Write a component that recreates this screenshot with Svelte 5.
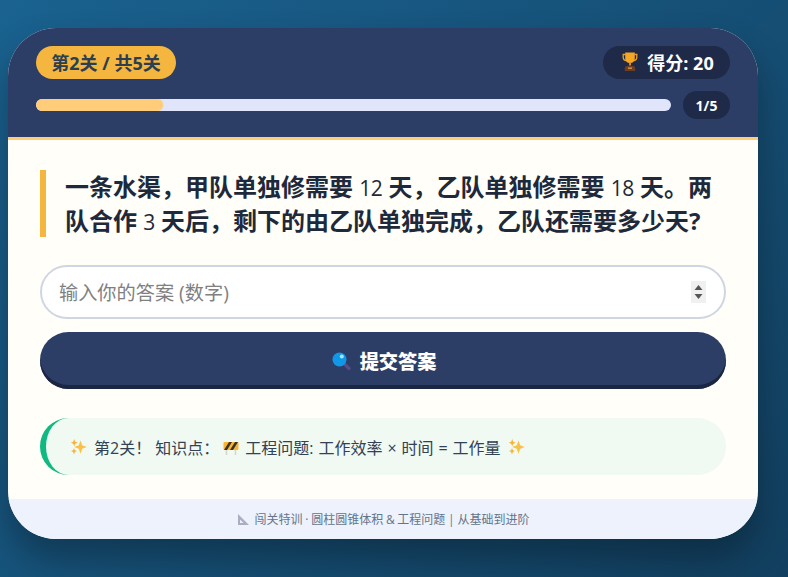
<script>
  const level = 2;
  const total = 5;
  const score = 20;
  const answered = 1;
  const progress = (answered / total) * 100;
</script>

{#snippet sparkle()}
  <svg class="emoji" viewBox="0 0 17 17" width="17" height="17">
    <path d="M10.500 2.500 12.200 7.200 16.800 9 12.200 10.800 10.500 15.800 8.800 10.800 4.200 9 8.800 7.200z" fill="#fbc145" />
    <path d="M4.200 1 5.200 3.700 7.600 4.700 5.200 5.700 4.200 8.300 3.200 5.700 .8 4.700 3.200 3.700z" fill="#f9b234" />
    <path d="M4 10 4.900 12.200 6.900 13.100 4.900 14 4 16.500 3.100 14 1 13.100 3.100 12.200z" fill="#f9b234" />
  </svg>
{/snippet}

<div class="card">
  <header class="top">
    <div class="row">
      <span class="level">第{level}关 / 共{total}关</span>
      <span class="score">
        <svg class="trophy" viewBox="0 0 16 19" width="16" height="19">
          <path d="M3.500 2.500H1.200v2.800c0 2.300 1.800 3.300 3.600 3.500M12.500 2.500h2.300v2.800c0 2.300-1.800 3.300-3.600 3.500" fill="none" stroke="#e8a030" stroke-width="1.300" />
          <path d="M3.200 .5h9.600v5.500c0 3.200-2.300 5.200-4.800 5.200S3.200 9.200 3.200 6z" fill="#f5a623" />
          <rect x="7" y="10.500" width="2" height="3" fill="#d98a14" />
          <path d="M2.800 19v-2.800c0-1.300 1-2.500 2.400-2.500h5.600c1.400 0 2.400 1.200 2.400 2.500V19z" fill="#6b3d22" />
          <rect x="6" y="15.500" width="4" height="1.300" fill="#e0a040" />
        </svg>
        得分: {score}
      </span>
    </div>
    <div class="row progress-row">
      <div class="track"><div class="fill" style="width: {progress}%"></div></div>
      <span class="count">{answered}/{total}</span>
    </div>
  </header>

  <main class="content">
    <p class="question">一条水渠，甲队单独修需要 <span class="num">12</span> 天，乙队单独修需要 <span class="num">18</span> 天。两队合作 <span class="num">3</span> 天后，剩下的由乙队单独完成，乙队还需要多少天?</p>

    <div class="answer-wrap">
      <input class="answer" type="number" placeholder="输入你的答案 (数字)" />
      <!-- spinner shown as if hovered -->
      <svg class="spin" viewBox="0 0 15 22" width="15" height="22" aria-hidden="true">
        <rect width="15" height="22" fill="#f0f0f0" />
        <path d="M7.500 4 11.500 9h-8z" fill="#555" />
        <path d="M3.500 13h8l-4 5z" fill="#555" />
      </svg>
    </div>

    <button class="submit">
      <svg viewBox="0 0 19 18" width="19" height="18">
        <path d="M12 11.500l5 5" stroke="#5b4a8a" stroke-width="3.200" stroke-linecap="round" />
        <circle cx="7.500" cy="7.500" r="7" fill="#1098e8" />
        <circle cx="9.800" cy="4.600" r="2" fill="#a5e4ff" />
      </svg>
      提交答案
    </button>

    <div class="tip">
      {@render sparkle()}
      <span>第{level}关！ 知识点：</span>
      <svg class="emoji barrier" viewBox="0 0 16 16" width="16" height="16">
        <path d="M3.500 11v5M12.500 11v5" stroke="#d9d4cc" stroke-width="1.600" />
        <rect x="0.500" y="3" width="15" height="8" rx="1" fill="#f7b733" />
        <path d="M1 11 6 3h3L4 11zM7 11l5-8h3l-5 8z" fill="#3d3226" />
      </svg>
      <span class="formula">工程问题: 工作效率 × 时间 = 工作量</span>
      {@render sparkle()}
    </div>
  </main>

  <footer class="foot">
    <svg viewBox="0 0 13 13" width="13" height="13">
      <path fill-rule="evenodd" d="M1 1l11 11H1zM3 6.500V10h3.500z" fill="#a9afc0" />
    </svg>
    闯关特训 · 圆柱圆锥体积 &amp; 工程问题 | 从基础到进阶
  </footer>
</div>

<style>
  :global(body) {
    min-height: 577px;
    overflow: hidden;
    background: linear-gradient(135deg, #1a6290 0%, #123f5f 100%);
    font-family: "Open Sans", "Noto Sans CJK SC", sans-serif;
  }

  .card {
    width: 750px;
    margin: 28px 0 0 8px;
    border-radius: 48px;
    overflow: hidden;
    background: #fffef8;
    box-shadow: 0 20px 35px rgba(0, 0, 0, 0.3);
  }

  .top {
    box-sizing: border-box;
    height: 112px;
    padding: 18px 28px 0;
    background: #2c3e66;
    border-bottom: 3px solid #ffcd7a;
  }

  .row {
    display: flex;
    justify-content: space-between;
    align-items: center;
  }

  .level {
    height: 33px;
    width: 140px;
    box-sizing: border-box;
    padding-bottom: 2px;
    display: flex;
    align-items: center;
    justify-content: center;
    border-radius: 40px;
    background: #f5b63f;
    color: #2c3e50;
    font-size: 18px;
    font-weight: 700;
  }

  .score {
    height: 33px;
    width: 127px;
    box-sizing: border-box;
    padding: 0 0 2px 3px;
    display: flex;
    align-items: center;
    justify-content: center;
    gap: 9px;
    border-radius: 40px;
    background: #1e2a47;
    color: #fff;
    font-size: 18px;
    font-weight: 700;
  }

  .progress-row {
    margin-top: 12px;
    gap: 12px;
  }

  .track {
    flex: 1;
    height: 12px;
    border-radius: 20px;
    background: #e0e5fb;
    overflow: hidden;
  }

  .fill {
    height: 100%;
    border-radius: 20px;
    background: #ffcd7a;
    box-shadow: 0 0 2px #ffcd7a;
  }

  .count {
    width: 47px;
    height: 28px;
    display: flex;
    align-items: center;
    justify-content: center;
    border-radius: 30px;
    background: #1e2a47;
    color: #fff;
    font-size: 14px;
    font-weight: 700;
  }

  .content {
    padding: 30px 32px 24px;
    display: flex;
    flex-direction: column;
  }

  .question {
    margin: 0 0 28px;
    padding-left: 19px;
    border-left: 6px solid #f5b63f;
    color: #1e293b;
    font-size: 24px;
    font-weight: 700;
    line-height: 33.500px;
  }

  .num {
    font-size: 21px;
    font-weight: 400;
    line-height: 0;
    letter-spacing: -0.5px;
  }

  .answer-wrap {
    position: relative;
    display: flex;
  }

  .answer {
    flex: 1;
    height: 54px;
    box-sizing: border-box;
    padding: 0 18px 0 17px;
    border: 2px solid #cfd6e2;
    border-radius: 40px;
    background: #fff;
    color: #1e293b;
    font-family: inherit;
    font-size: 19.200px;
    outline: none;
    appearance: textfield;
  }

  .answer::placeholder {
    color: #808080;
  }

  .spin {
    position: absolute;
    top: 16px;
    right: 20px;
  }

  .submit {
    margin-top: 13px;
    height: 57px;
    box-sizing: border-box;
    padding-left: 8px;
    display: flex;
    align-items: center;
    justify-content: center;
    gap: 9px;
    border: none;
    border-radius: 40px;
    background: #2c3e66;
    box-shadow: inset 0 -4px 0 #1a2642;
    color: #fff;
    font-family: inherit;
    font-size: 19.200px;
    font-weight: 900;
  }

  .tip {
    margin-top: 29px;
    height: 57px;
    box-sizing: border-box;
    padding-left: 24px;
    display: flex;
    align-items: center;
    gap: 7px;
    border-left: 6px solid #10b981;
    border-radius: 40px;
    background: #f0f9f2;
    color: #334155;
    font-size: 16px;
  }

  .barrier {
    margin: 0 -1px 0 -3px;
  }

  .formula {
    word-spacing: 0.8px;
  }

  .foot {
    height: 40px;
    display: flex;
    align-items: center;
    justify-content: center;
    gap: 5px;
    background: #edf2fc;
    color: #64748b;
    font-size: 12px;
    word-spacing: -0.4px;
  }
</style>
